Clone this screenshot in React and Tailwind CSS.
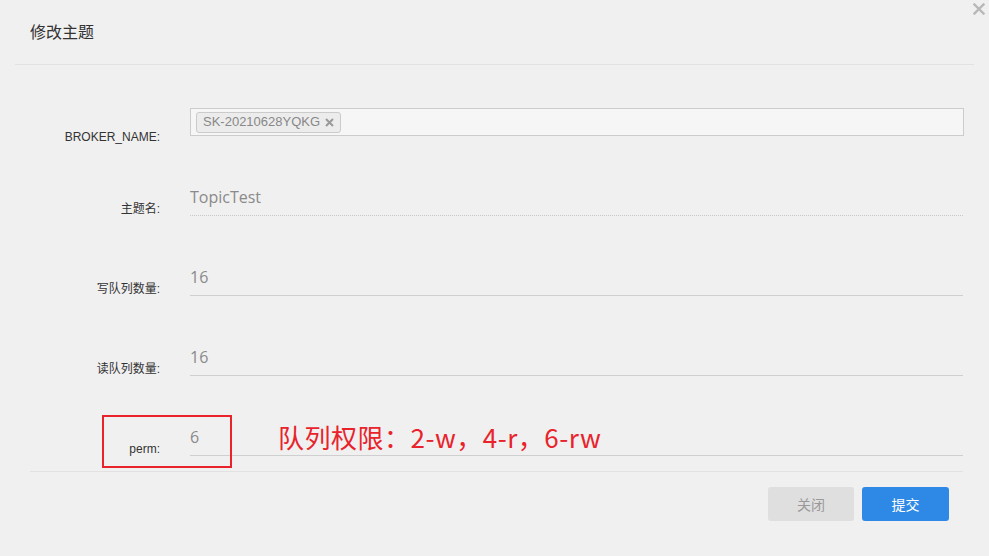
import React from "react";

const labelCls =
  "w-[160px] shrink-0 text-right text-[12px] leading-[14px] text-[#333] self-end";

function LineField({ value, dotted, label }) {
  return (
    <div className="flex h-[33px]">
      <div className={labelCls}>{label}</div>
      <div
        className={
          "ml-[30px] w-[773px] h-[33px] text-[16px] leading-[28px] text-[#8a8a8a] font-['Open_Sans','Noto_Sans_CJK_SC',sans-serif] " +
          (dotted
            ? "border-b border-dotted border-[#c8c8c8]"
            : "border-b border-[#cfcfcf]")
        }
      >
        {value}
      </div>
    </div>
  );
}

export default function App() {
  return (
    <div className="relative w-[989px] h-[556px] bg-[#f0f0f0] overflow-hidden font-['Liberation_Sans','Noto_Sans_CJK_SC',sans-serif]">
      {/* close */}
      <svg
        className="absolute left-[973px] top-[3px]"
        width="12"
        height="12"
        viewBox="0 0 12 12"
      >
        <path
          d="M1.5 1.5 L10.5 10.5 M10.5 1.5 L1.5 10.5"
          stroke="#b8b8b8"
          strokeWidth="2.4"
          strokeLinecap="square"
        />
      </svg>

      {/* header */}
      <div className="mx-[15px] h-[65px] border-b border-[#e2e2e2] flex items-center pl-[15px] pb-[2px]">
        <span className="text-[16px] text-[#333] font-['Noto_Sans_CJK_SC',sans-serif]">
          修改主题
        </span>
      </div>

      {/* body */}
      <div className="pt-[43px]">
        <div className="flex h-[36px]">
          <div className={labelCls}>BROKER_NAME:</div>
          <div className="ml-[30px] w-[774px] h-[28px] border border-[#cccccc] bg-[#f6f6f6] flex items-center pl-[5px]">
            <div className="h-[21px] px-[6px] flex items-center gap-[5px] border border-[#cbcbcb] rounded-[3px] bg-[#ececec] text-[13px] text-[#888]">
              <span>SK-20210628YQKG</span>
              <svg width="9" height="9" viewBox="0 0 9 9">
                <path
                  d="M1 1 L8 8 M8 1 L1 8"
                  stroke="#999"
                  strokeWidth="2"
                />
              </svg>
            </div>
          </div>
        </div>

        <div className="mt-[39px]">
          <LineField label="主题名:" value="TopicTest" dotted />
        </div>
        <div className="mt-[47px]">
          <LineField label="写队列数量:" value="16" />
        </div>
        <div className="mt-[47px]">
          <LineField label="读队列数量:" value="16" />
        </div>
        <div className="mt-[47px]">
          <LineField label="perm:" value="6" />
        </div>
      </div>

      {/* footer */}
      <div className="mt-[15px] mx-[30px] w-[933px] border-t border-[#e2e2e2]" />
      <div className="flex justify-end gap-[8px] pr-[40px] pt-[15px]">
        <button className="w-[86px] h-[34px] rounded-[3px] bg-[#dfdfdf] text-[14px] text-[#999] font-['Noto_Sans_CJK_SC',sans-serif]">
          关闭
        </button>
        <button className="w-[87px] h-[34px] rounded-[3px] bg-[#2e89e6] text-[14px] text-white font-['Noto_Sans_CJK_SC',sans-serif]">
          提交
        </button>
      </div>

      {/* annotations */}
      <div className="absolute left-[102px] top-[415px] w-[130px] h-[53px] border-2 border-[#e8232b]" />
      <div className="absolute left-[278px] top-[419px] text-[26px] leading-[36px] tracking-[0.5px] text-[#e8232b] font-['Noto_Sans_CJK_SC',sans-serif] whitespace-nowrap">
        队列权限：2-w，4-r，6-rw
      </div>
    </div>
  );
}
